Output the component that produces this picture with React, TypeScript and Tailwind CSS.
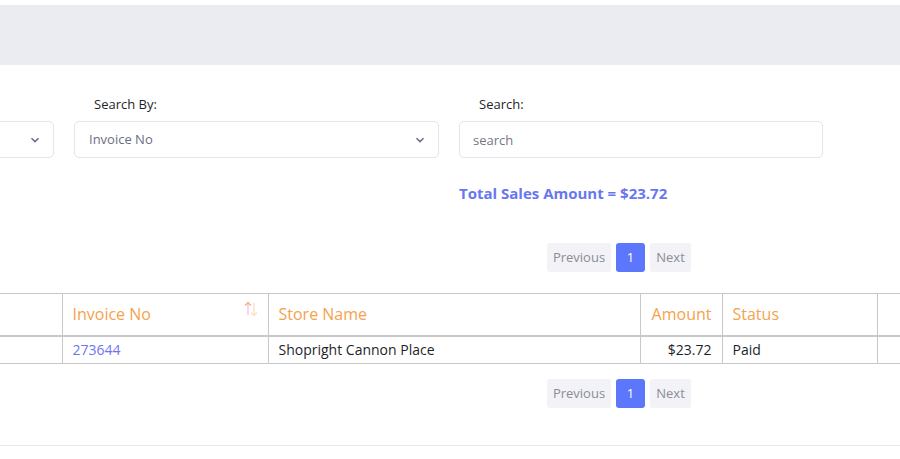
import React from 'react';

const font = { fontFamily: '"Open Sans", "Liberation Sans", sans-serif' };

function Chevron() {
  return (
    <svg width="10" height="6" viewBox="0 0 10 6" className="text-[#6b6f82]">
      <path d="M1.5 1.2 L5 4.6 L8.5 1.2" fill="none" stroke="currentColor" strokeWidth="1.6" />
    </svg>
  );
}

function SortIcon() {
  return (
    <svg width="16" height="18" viewBox="0 0 16 18" className="shrink-0">
      <path d="M5 15 V3" stroke="#f9c3e4" strokeWidth="1.4" />
      <path d="M2.2 5.6 L5 2.6 L7.8 5.6" fill="none" stroke="#f6b47a" strokeWidth="1.4" />
      <path d="M11 3 V15" stroke="#fde0c4" strokeWidth="1.4" />
      <path d="M8.2 12.4 L11 15.4 L13.8 12.4" fill="none" stroke="#fde0c4" strokeWidth="1.4" />
    </svg>
  );
}

function Pagination() {
  return (
    <div className="flex w-[1002px] justify-end gap-[5px] text-[13px]">
      <button className="h-[29px] w-[64px] rounded-[3px] bg-[#f2f2f7] text-[#8a8d98]">Previous</button>
      <button className="h-[29px] w-[29px] rounded-[3px] bg-[#5c76fc] text-white">1</button>
      <button className="h-[29px] w-[41px] rounded-[3px] bg-[#f2f2f7] text-[#8a8d98]">Next</button>
    </div>
  );
}

export default function App() {
  return (
    <div className="h-[459px] w-[900px] overflow-hidden bg-white" style={font}>
      <div className="mt-[5px] h-[60px] bg-[#ebecf1]" />

      <div className="ml-[-311px] w-[1400px]">
        {/* Filters */}
        <div className="mt-[30px] flex gap-[20px]">
          <div className="w-[365px]">
            <div className="h-[18px]" />
            <div className="mt-2 flex h-[37px] items-center justify-end rounded-[5px] border border-[#e3e4ec] pr-[13px]">
              <Chevron />
            </div>
          </div>
          <div className="w-[365px]">
            <div className="pl-5 text-[13px] leading-[18px] text-[#1d1f2b]">Search By:</div>
            <div className="mt-2 flex h-[37px] items-center justify-between rounded-[5px] border border-[#e3e4ec] pl-[14px] pr-[13px] text-[13px] text-[#6b6f82]">
              <span>Invoice No</span>
              <Chevron />
            </div>
          </div>
          <div className="w-[364px]">
            <div className="pl-5 text-[13px] leading-[18px] text-[#1d1f2b]">Search:</div>
            <input
              placeholder="search"
              className="mt-2 h-[37px] w-full rounded-[5px] border border-[#e3e4ec] px-[13px] text-[13px] text-[#6b6f82] outline-none placeholder:text-[#74778a]"
            />
          </div>
        </div>

        <div className="mt-[25px] flex">
          <div className="w-[770px]" />
          <div className="text-[15px] font-bold leading-5 text-[#6777ef]">Total Sales Amount = $23.72</div>
        </div>

        <div className="mt-[40px]">
          <Pagination />
        </div>

        {/* Table */}
        <table className="mt-[21px] border-collapse text-left">
          <colgroup>
            <col className="w-[373px]" />
            <col className="w-[206px]" />
            <col className="w-[372px]" />
            <col className="w-[82px]" />
            <col className="w-[155px]" />
            <col className="w-[200px]" />
          </colgroup>
          <thead>
            <tr className="h-[42px] border-t border-b-2 border-[#c8c8c8] text-[16px] font-normal text-[#f5a24d]">
              <th className="border-r border-[#c8c8c8] px-[10px] font-normal"></th>
              <th className="border-r border-[#c8c8c8] px-[10px] font-normal">
                <div className="flex items-start justify-between">
                  <span>Invoice No</span>
                  <span className="-mt-[2px] mr-[-1px]"><SortIcon /></span>
                </div>
              </th>
              <th className="border-r border-[#c8c8c8] px-[10px] font-normal">Store Name</th>
              <th className="border-r border-[#c8c8c8] px-[10px] text-right font-normal">Amount</th>
              <th className="border-r border-[#c8c8c8] px-[10px] font-normal">Status</th>
              <th className="px-[10px] font-normal"></th>
            </tr>
          </thead>
          <tbody>
            <tr className="h-[28px] border-b border-[#c8c8c8] text-[14px] text-[#1d1f2b]">
              <td className="border-r border-[#c8c8c8] px-[10px]"></td>
              <td className="border-r border-[#c8c8c8] px-[10px] text-[#6f74f2]">273644</td>
              <td className="border-r border-[#c8c8c8] px-[10px]">Shopright Cannon Place</td>
              <td className="border-r border-[#c8c8c8] px-[10px] text-right">$23.72</td>
              <td className="border-r border-[#c8c8c8] px-[10px]">Paid</td>
              <td className="px-[10px]"></td>
            </tr>
          </tbody>
        </table>

        <div className="mt-[15px]">
          <Pagination />
        </div>
      </div>

      <div className="mt-[37px] border-t border-[#e8e8ee]" />
    </div>
  );
}
